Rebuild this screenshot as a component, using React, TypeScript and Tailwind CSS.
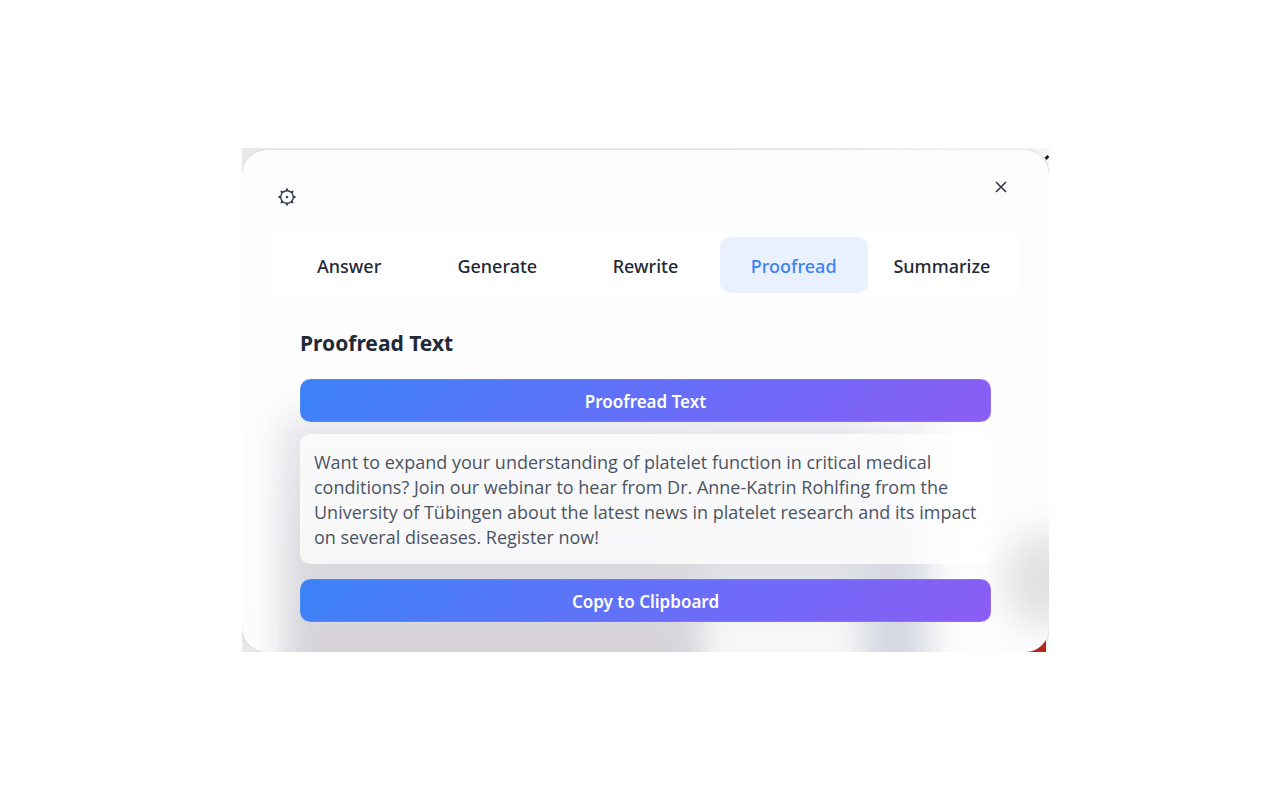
import { useState } from "react";

const TABS = ["Answer", "Generate", "Rewrite", "Proofread", "Summarize"];

const RESULT_TEXT =
  "Want to expand your understanding of platelet function in critical medical conditions? Join our webinar to hear from Dr. Anne-Katrin Rohlfing from the University of Tübingen about the latest news in platelet research and its impact on several diseases. Register now!";

function GearIcon() {
  const teeth = [0, 45, 90, 135, 180, 225, 270, 315];

  return (
    <svg viewBox="0 0 18 18" className="size-[18px]" fill="none" aria-hidden="true">
      <circle cx="9" cy="9" r="6.3" stroke="currentColor" strokeWidth="1.4" />
      <circle cx="9" cy="9" r="1.3" fill="currentColor" />
      {teeth.map((angle) => (
        <path
          key={angle}
          d="M7.3 2.8 8.5.2h1l1.2 2.6z"
          fill="currentColor"
          transform={`rotate(${angle} 9 9)`}
        />
      ))}
    </svg>
  );
}

function CloseIcon() {
  return (
    <svg viewBox="0 0 12 12" className="size-3" fill="none" aria-hidden="true">
      <path d="M1 1l10 10M11 1L1 11" stroke="currentColor" strokeWidth="1.7" />
    </svg>
  );
}

// Page content showing through the frosted panel.
function Backdrop() {
  return (
    <div
      className="pointer-events-none absolute inset-0 flex flex-col justify-end overflow-hidden"
      aria-hidden="true"
    >
      <div className="-mb-10 flex h-[275px] blur-[16px]">
        <div className="w-[5%]" />
        <div className="w-[52%] bg-[linear-gradient(180deg,#e6e5eb,#dcdbe2_30%,#d9d8dd_60%,#d5d2da)]" />
        <div className="w-[20%] bg-[linear-gradient(180deg,#e6e5eb,#dfe0e8_30%,#dadee2_56%,#f6f8f8_72%)]" />
        <div className="w-[8%] bg-[linear-gradient(180deg,#f0f0f4,#e2e4ec_30%,#d5d8e2_60%)]" />
        <div className="flex flex-1 items-end justify-end pb-16">
          <div className="-mr-9 h-24 w-20 rounded-full bg-[#e2e2e2]" />
        </div>
      </div>
    </div>
  );
}

function ActionButton({ label }: { label: string }) {
  return (
    <button
      type="button"
      className="h-[43px] w-full rounded-[10px] bg-[linear-gradient(135deg,#3b82f6,#6470f8_50%,#8b5cf6)] pt-[3px] text-[17px] font-semibold text-white shadow-[inset_0_0_1px_#ffffff]"
    >
      {label}
    </button>
  );
}

export default function App() {
  const [active, setActive] = useState("Proofread");

  return (
    <main className="flex min-h-screen items-center justify-center bg-white pl-[11px] font-['Noto_Sans','Open_Sans',sans-serif] text-[#1f2937]">
      <div className="relative w-full max-w-[807px] overflow-hidden bg-[linear-gradient(90deg,#e9e9e9_60%,#f5f5f5_90%)] pt-[2px]">
        <div className="absolute bottom-0 right-[3px] h-4 w-5 bg-[#b5281c]" />
        <div className="absolute right-0 top-2 h-[3px] w-1 -rotate-45 bg-[#1c1c1c]" />

        <section className="relative overflow-hidden rounded-3xl bg-[#fdfdfd] px-7 pb-[30px] pt-[31px] shadow-[0_0_1px_#999999]">
          <Backdrop />

          <div className="relative flex flex-col gap-[30px]">
            <div className="flex flex-col gap-[26px]">
              <header className="flex items-start justify-between pl-2 pr-[14px]">
                <button type="button" aria-label="Settings" className="pt-[7px] text-[#374151]">
                  <GearIcon />
                </button>
                <button type="button" aria-label="Close" className="text-[#374151]">
                  <CloseIcon />
                </button>
              </header>

              <nav className="flex rounded-xl bg-white p-[5px]">
                {TABS.map((tab) => (
                  <button
                    key={tab}
                    type="button"
                    onClick={() => setActive(tab)}
                    className={`h-14 flex-1 basis-0 rounded-[10px] pt-[2px] text-[18px] font-medium ${
                      tab === active ? "bg-[#eaf1fe] text-[#3b82f6]" : "text-[#1f2937]"
                    }`}
                  >
                    {tab}
                  </button>
                ))}
              </nav>
            </div>

            <div className="flex flex-col gap-5 px-[30px]">
              <h2 className="text-[21px] font-bold leading-[31px]">Proofread Text</h2>
              <div className="flex flex-col gap-3">
                <ActionButton label="Proofread Text" />
                <div className="flex flex-col gap-[15px]">
                  <p className="rounded-[10px] bg-white/80 pb-[14px] pl-[14px] pr-2 pt-4 font-['Open_Sans','Noto_Sans',sans-serif] text-[18px] leading-[25px] text-[#4b5563]">
                    {RESULT_TEXT}
                  </p>
                  <ActionButton label="Copy to Clipboard" />
                </div>
              </div>
            </div>
          </div>
        </section>
      </div>
    </main>
  );
}
